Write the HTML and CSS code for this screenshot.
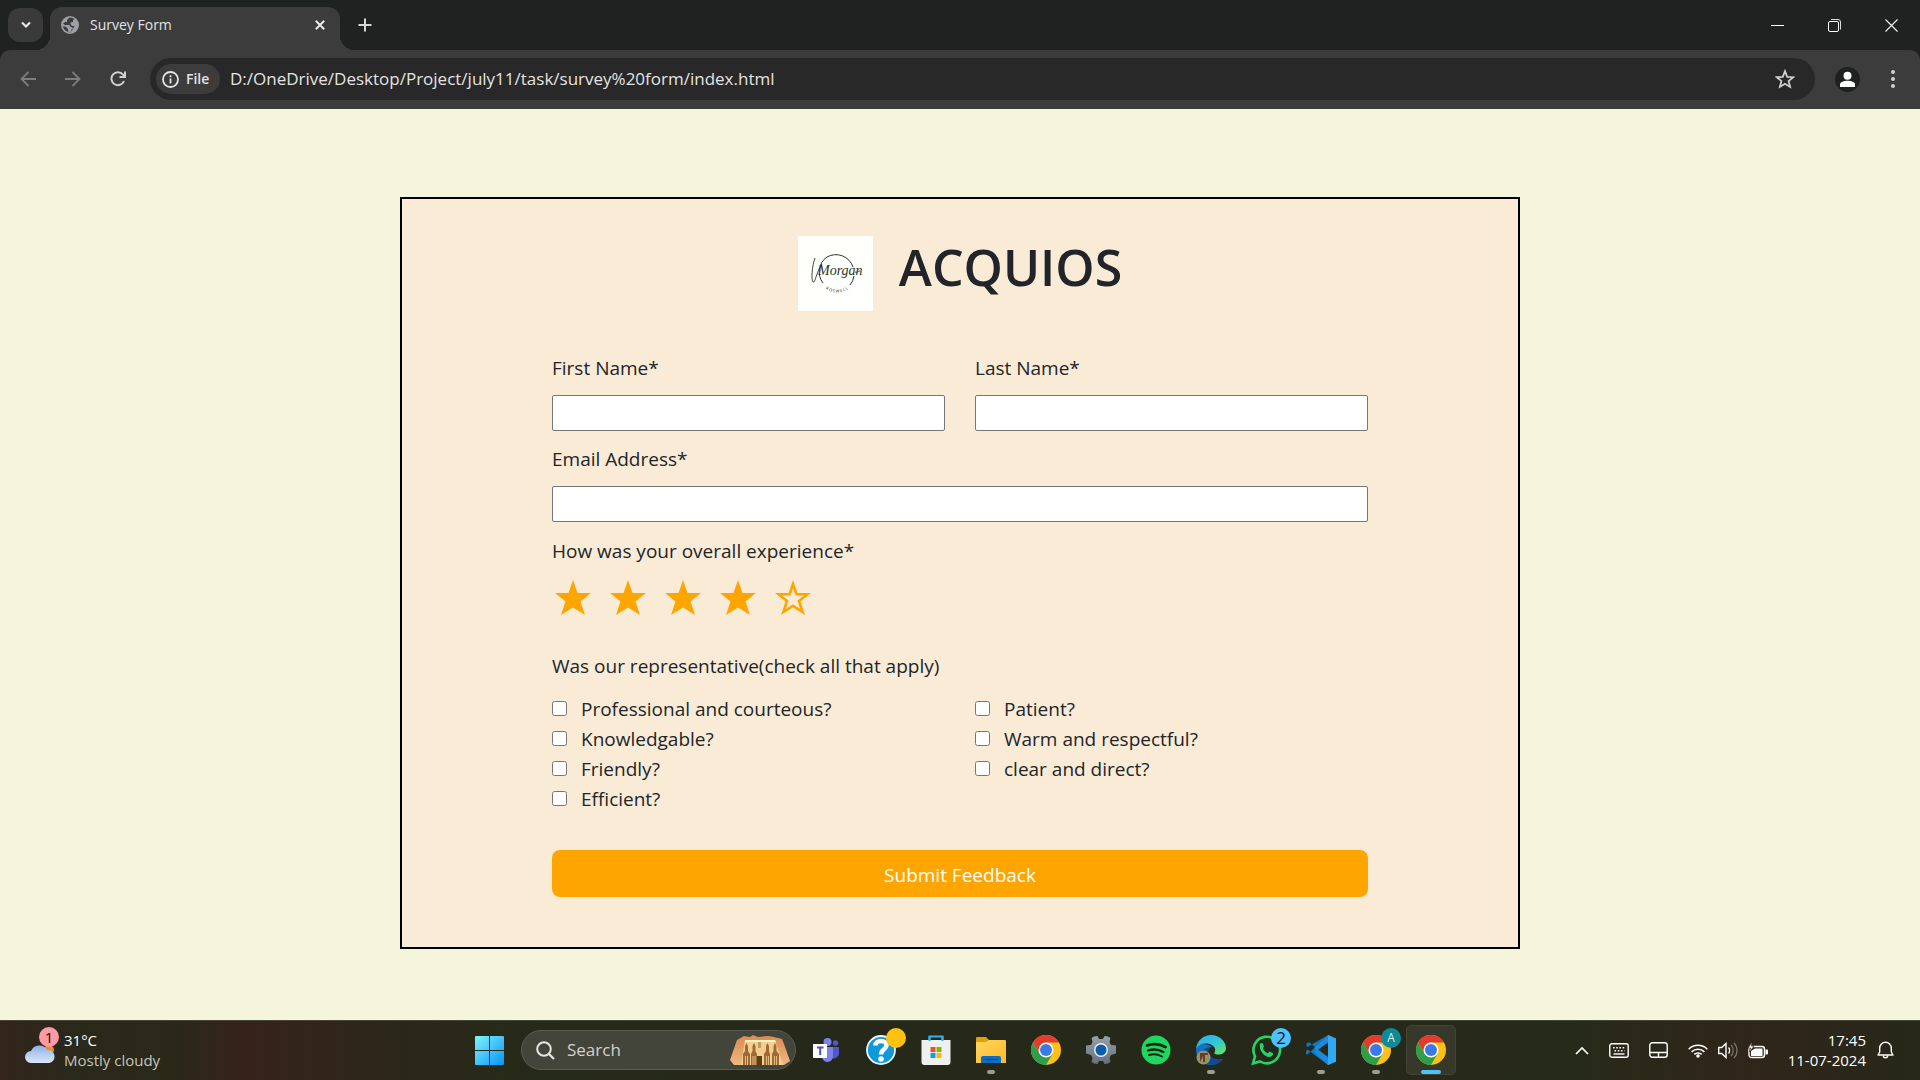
FILE: index.html
```html
<!DOCTYPE html>
<html lang="en">
<head>
<meta charset="utf-8">
<meta name="viewport" content="width=device-width, initial-scale=1">
<title>Survey Form</title>
<link rel="stylesheet" href="styles.css">
</head>
<body>
<svg class="defs" aria-hidden="true">
  <defs>
    <linearGradient id="win" x1="0" y1="0" x2="1" y2="1"><stop offset="0" stop-color="#7df4ff"/><stop offset="1" stop-color="#0a93f7"/></linearGradient>
    <linearGradient id="cloud" x1="0" y1="0" x2="0" y2="1"><stop offset="0" stop-color="#8fb0e8"/><stop offset="1" stop-color="#dbe7fb"/></linearGradient>
    <linearGradient id="folder" x1="0" y1="0" x2="1" y2="1"><stop offset="0" stop-color="#ffd75e"/><stop offset="1" stop-color="#fdb92a"/></linearGradient>
    <linearGradient id="gear" x1="0" y1="0" x2="0" y2="1"><stop offset="0" stop-color="#97a1ab"/><stop offset="1" stop-color="#66707c"/></linearGradient>
    <linearGradient id="edgeTop" x1="0" y1="0" x2="1" y2="1"><stop offset="0" stop-color="#2fa9e8"/><stop offset=".5" stop-color="#2fc5dc"/><stop offset="1" stop-color="#6bea4e"/></linearGradient>
    <linearGradient id="stone" x1="0" y1="0" x2="0" y2="1"><stop offset="0" stop-color="#d98a54"/><stop offset="1" stop-color="#efb87f"/></linearGradient>
    <symbol id="chrome" viewBox="0 0 30 30">
      <circle cx="15" cy="15" r="15" fill="#fbc116"/>
      <path d="M2 7.500A15 15 0 0 1 28 7.500L15 7.500 8.500 18.800Z" fill="#e33b2e"/>
      <path d="M2 7.500A15 15 0 0 0 15 30L21.500 18.800 8.500 18.800Z" fill="#2e9e49"/>
      <circle cx="15" cy="15" r="7.500" fill="#fff"/>
      <circle cx="15" cy="15" r="6" fill="#3b78e8"/>
    </symbol>
    <symbol id="star" viewBox="0 0 36 35"><path d="M18 0l4.500 13H36L25.500 21.500 30 35 18 27.500 6 35l4.500-13.500L0 13h13.500Z" fill="#ffa500"/></symbol>
    <symbol id="star-open" viewBox="0 0 36 35"><path fill-rule="evenodd" d="M18 0l4.500 13H36L25.500 21.500 30 35 18 27.500 6 35l4.500-13.500L0 13h13.500Zm0 8.500L15.300 15.500H7L13.500 20.500 10.800 29 18 24.300 25.200 29 22.500 20.500 29 15.500H20.700Z" fill="#ffa500"/></symbol>
  </defs>
</svg>

<header class="browser">
  <div class="tabstrip">
    <button class="tab-search" aria-label="Search tabs"><svg width="12" height="8" viewBox="0 0 12 8"><path d="M2 1.500l4 4 4-4" fill="none" stroke="#e8e8e8" stroke-width="2.200"/></svg></button>
    <div class="tab">
      <svg width="18" height="18" viewBox="0 0 18 18"><circle cx="9" cy="9" r="9" fill="#9aa0a6"/><path d="M8.500 1.500 6 4v2H4L2 7.500 4 9h4.500l1 2H11l1 1.500-2 1.500v2.500A7.500 7.500 0 0 1 2 10l3 1 2 2v2.500l2 1 3-3.500 1.500-3H11L9.500 8V6.500L12 6V4l1.500-1A7.500 7.500 0 0 0 8.500 1.500Z" fill="#3c3c3c"/></svg>
      <span class="tab-title">Survey Form</span>
      <button class="plain" aria-label="Close tab"><svg width="10" height="10" viewBox="0 0 10 10"><path d="M.8.8l8.400 8.400M9.200.8.8 9.200" stroke="#e8e8e8" stroke-width="2"/></svg></button>
    </div>
    <button class="plain new-tab" aria-label="New tab"><svg width="14" height="14" viewBox="0 0 14 14"><path d="M7 .5v13M.5 7h13" stroke="#d6d6d6" stroke-width="2"/></svg></button>
    <div class="window-buttons">
      <button class="plain" aria-label="Minimize"><svg width="13" height="13" viewBox="0 0 13 13"><path d="M0 6.500h13" stroke="#fff"/></svg></button>
      <button class="plain" aria-label="Restore"><svg width="13" height="13" viewBox="0 0 13 13"><rect x=".5" y="2.500" width="10" height="10" rx="1.500" fill="none" stroke="#fff"/><path d="M3 .5h7a2.500 2.500 0 0 1 2.500 2.500v7.500" fill="none" stroke="#ddd"/></svg></button>
      <button class="plain" aria-label="Close"><svg width="13" height="13" viewBox="0 0 13 13"><path d="M.5.5l12 12M12.500.5l-12 12" stroke="#eee" stroke-width="1.200"/></svg></button>
    </div>
  </div>
  <div class="toolbar">
    <button class="plain" aria-label="Back"><svg width="16" height="16" viewBox="0 0 16 16"><path d="M16 8H2M8.500 1 1.500 8l7 7" fill="none" stroke="#7c7c7c" stroke-width="1.800"/></svg></button>
    <button class="plain" aria-label="Forward"><svg width="16" height="16" viewBox="0 0 16 16"><path d="M0 8h14M7.500 1l7 7-7 7" fill="none" stroke="#7c7c7c" stroke-width="1.800"/></svg></button>
    <button class="plain" aria-label="Reload"><svg width="16" height="16" viewBox="0 0 16 16"><path d="M14 10A6.500 6.500 0 1 1 13 3.600L14.500 5.500M15 .5v5.500H9.500" fill="none" stroke="#d0d0d0" stroke-width="2"/></svg></button>
    <div class="omnibox">
      <button class="chip"><svg width="17" height="17" viewBox="0 0 17 17"><circle cx="8.500" cy="8.500" r="7.500" fill="none" stroke="#e3e3e3" stroke-width="1.800"/><path d="M8.500 7.500v5M8.500 4.200v2" stroke="#e3e3e3" stroke-width="1.800"/></svg>File</button>
      <input class="url" type="text" aria-label="Address" value="D:/OneDrive/Desktop/Project/july11/task/survey%20form/index.html">
      <button class="plain bookmark" aria-label="Bookmark"><svg width="20" height="20" viewBox="0 0 20 20"><path d="M10 2.200l2.200 5.600 6 .4-4.600 3.800 1.500 5.900L10 14.700l-5.100 3.200 1.500-5.900L1.800 8.200l6-.4Z" fill="none" stroke="#cfcfcf" stroke-width="1.800"/></svg></button>
    </div>
    <button class="plain avatar" aria-label="Profile"><svg width="25" height="25" viewBox="0 0 25 25"><circle cx="12.500" cy="12.500" r="12.500" fill="#1f2121"/><circle cx="12.500" cy="8.800" r="4" fill="#fff"/><path d="M5 20v-2.500c0-2.500 4-3.700 7.500-3.700s7.500 1.200 7.500 3.700V20Z" fill="#fff"/></svg></button>
    <button class="plain" aria-label="Menu"><svg width="4" height="18" viewBox="0 0 4 18"><g fill="#d0d0d0"><circle cx="2" cy="2" r="2"/><circle cx="2" cy="9" r="2"/><circle cx="2" cy="16" r="2"/></g></svg></button>
  </div>
</header>

<main class="page">
  <form class="card">
    <div class="brand">
      <svg class="logo" viewBox="0 0 75 75" role="img" aria-label="Morgan">
        <rect width="75" height="75" fill="#fffffb"/>
        <path d="M25 47A18 18 0 0 1 29 21a18 18 0 0 1 26 10M56 40a18 18 0 0 1-4 9" fill="none" stroke="#273530"/>
        <path d="M17 22c-3 8-4 22-2 24s4-12 9-18" fill="none" stroke="#273530" stroke-width=".9"/>
        <path d="M57 36c2 1 3-1 5-1" fill="none" stroke="#273530" stroke-width=".9"/>
        <text x="20" y="39" class="logo-name">Morgan</text>
        <path id="arc" d="M22 46a19 19 0 0 0 34 0" fill="none"/>
        <text class="logo-sub" text-anchor="middle"><textPath href="#arc" startOffset="50%">R O S W E L L</textPath></text>
      </svg>
      <h1>ACQUIOS</h1>
    </div>

    <div class="fields">
      <div class="field"><label for="first">First Name*</label><input id="first" type="text"></div>
      <div class="field"><label for="last">Last Name*</label><input id="last" type="text"></div>
      <div class="field wide"><label for="email">Email Address*</label><input id="email" type="email"></div>
    </div>

    <div class="rating" role="group" aria-labelledby="rating-label">
      <p id="rating-label">How was your overall experience*</p>
      <div class="stars">
        <button type="button" class="plain" aria-label="1 star"><svg width="36" height="35"><use href="#star"/></svg></button>
        <button type="button" class="plain" aria-label="2 stars"><svg width="36" height="35"><use href="#star"/></svg></button>
        <button type="button" class="plain" aria-label="3 stars"><svg width="36" height="35"><use href="#star"/></svg></button>
        <button type="button" class="plain" aria-label="4 stars"><svg width="36" height="35"><use href="#star"/></svg></button>
        <button type="button" class="plain" aria-label="5 stars"><svg width="36" height="35"><use href="#star-open"/></svg></button>
      </div>
    </div>

    <fieldset class="traits">
      <legend>Was our representative(check all that apply)</legend>
      <div class="trait-columns">
        <div>
          <label><input type="checkbox">Professional and courteous?</label>
          <label><input type="checkbox">Knowledgable?</label>
          <label><input type="checkbox">Friendly?</label>
          <label><input type="checkbox">Efficient?</label>
        </div>
        <div>
          <label><input type="checkbox">Patient?</label>
          <label><input type="checkbox">Warm and respectful?</label>
          <label><input type="checkbox">clear and direct?</label>
        </div>
      </div>
    </fieldset>

    <button class="submit" type="submit">Submit Feedback</button>
  </form>
</main>

<footer class="taskbar">
  <button class="weather">
    <span class="weather-icon">
      <svg width="30" height="19" viewBox="0 0 30 19"><circle cx="24" cy="6" r="5" fill="#f98a1c"/><path d="M6 19a6 6 0 0 1 0-12 9 9 0 0 1 16-1 6.500 6.500 0 0 1 2 13Z" fill="url(#cloud)"/></svg>
      <span class="badge pink">1</span>
    </span>
    <span class="weather-text"><span>31°C</span><span class="dim">Mostly cloudy</span></span>
  </button>

  <nav class="apps" aria-label="Apps">
    <button class="app" aria-label="Start"><svg width="29" height="29" viewBox="0 0 29 29"><path d="M1 0h13v14H0V1a1 1 0 0 1 1-1ZM15 0h13a1 1 0 0 1 1 1v13H15ZM0 15h14v14H1a1 1 0 0 1-1-1ZM15 15h14v13a1 1 0 0 1-1 1H15Z" fill="url(#win)"/></svg></button>
    <label class="search">
      <svg width="19" height="19" viewBox="0 0 19 19"><circle cx="8" cy="8" r="6.800" fill="none" stroke="#e6e6e6" stroke-width="2"/><path d="M13 13l5 5" stroke="#e6e6e6" stroke-width="2.200"/></svg>
      <input type="text" placeholder="Search" aria-label="Search">
      <svg width="60" height="32" viewBox="0 0 60 32">
        <path d="M0 26 7 6l7-4 6 1 3-2 5 2 10-1 6 1 8 2 2 5 6 17-6 4H4Z" fill="url(#stone)"/>
        <path d="M11 31 15 6h30l8 25Z" fill="#f1cf93"/>
        <path d="M15 6h30l1 2H15Z" fill="#fff0c4"/>
        <g fill="#a06a35"><path d="M13 31V20l2-3v-5l1.500-3 1.500 3v5l2 3v11ZM21 31V20l1.500-3v-5l1.500-3 1.500 3v5l1.500 3v11ZM34 31V20l2-3v-5l1.500-3 1.500 3v5l1 3v11ZM42 31V20l1.500-3v-5L45 9l1.500 3v5l2.500 3v11Z"/><path d="M28 8h3v6h-3Z" fill="#c79a5b"/></g>
        <g stroke="#f1cf93" stroke-width=".8"><path d="M15.500 22v9M17.500 22v9M23 22v9M25 22v9M36.500 22v9M38.500 22v9M44.500 22v9M46.500 22v9"/></g>
        <path d="M27 22h5v9h-5Z" fill="#5b3d14"/>
      </svg>
    </label>
    <button class="app" aria-label="Teams"><svg width="26" height="24" viewBox="0 0 26 24"><circle cx="14.500" cy="4" r="4" fill="#7b83eb"/><circle cx="22.500" cy="5" r="2.700" fill="#5059c9"/><path d="M16 9h10v7a5 5 0 0 1-8 3.500Z" fill="#5059c9"/><path d="M9 9h11v9a5.500 5.500 0 0 1-11 1Z" fill="#7b83eb"/><rect y="6" width="14" height="14" fill="#fff"/><path d="M4 9.500h6.500M7.200 9.500V17" stroke="#4b53bc" stroke-width="2"/></svg></button>
    <button class="app" aria-label="Help"><svg width="30" height="30" viewBox="0 0 30 30"><circle cx="15" cy="15" r="14" fill="#0d99da" stroke="#eef6fa" stroke-width="1.800"/><path d="M9.500 10.500c0-6 11-6 11 0 0 4-5.500 3.500-5.500 9" fill="none" stroke="#fff" stroke-width="4.500"/><circle cx="15" cy="24" r="2.800" fill="#fff"/></svg><span class="badge yellow"></span></button>
    <button class="app" aria-label="Store"><svg width="30" height="30" viewBox="0 0 30 30"><path d="M8.500 8V1.500h13V8" fill="none" stroke="#2fb5ee" stroke-width="2"/><path d="M.5 5h29v22a3 3 0 0 1-3 3h-23a3 3 0 0 1-3-3Z" fill="#f0f0f0"/><path d="M8.500 6V1.500M21.500 6V1.500" stroke="#2fb5ee" stroke-width="2"/><path d="M9.500 12h5v5h-5Z" fill="#f25022"/><path d="M15.500 12h5v5h-5Z" fill="#7fba00"/><path d="M9.500 18h5v5h-5Z" fill="#00a4ef"/><path d="M15.500 18h5v5h-5Z" fill="#ffb900"/></svg></button>
    <button class="app open" aria-label="File Explorer"><svg width="30" height="28" viewBox="0 0 30 28"><path d="M0 2a1 1 0 0 1 1-1h9l3 3v5H0Z" fill="#e3a008"/><path d="M0 6h10l3-2h16a1 1 0 0 1 1 1v22H0Z" fill="url(#folder)"/><path d="M5 27v-5a2 2 0 0 1 2-2h16a2 2 0 0 1 2 2v5Z" fill="#0f6cc4"/><path d="M8.500 23.500h13" stroke="#0a4a8c"/></svg></button>
    <button class="app" aria-label="Chrome"><svg width="30" height="30"><use href="#chrome"/></svg></button>
    <button class="app" aria-label="Settings"><svg width="30" height="30" viewBox="0 0 30 30"><path d="M8 1.500 11.500 1 13 4h4l1.500-3L22 1.500 24.500 3 23.500 7l1.500 3 5 .5v8l-5 1.500-1.500 3 1 4L22 28.500 18.500 29 17 26h-4l-1.500 3L8 28.500 5.500 27l1-4L5 20l-5-1.500v-8L5 10 6.500 7l-1-4Z" fill="url(#gear)"/><circle cx="15" cy="15" r="7" fill="#e8f0f6"/><circle cx="15" cy="15" r="5.500" fill="#0b5cad"/></svg></button>
    <button class="app" aria-label="Spotify"><svg width="30" height="30" viewBox="0 0 30 30"><circle cx="15" cy="15" r="14.500" fill="#1ed760"/><g fill="none" stroke="#16200f" stroke-linecap="round"><path d="M6 10.500c6-2 13-1.500 18.500 1.500" stroke-width="2.800"/><path d="M7 15.500c5-1.600 11-1 15.500 1.500" stroke-width="2.300"/><path d="M8 20c4-1.200 9-.8 13 1.500" stroke-width="1.900"/></g></svg></button>
    <button class="app open" aria-label="Edge"><svg width="30" height="30" viewBox="0 0 30 30"><path d="M0 15a15 15 0 0 0 27 9c-5 2-14 1-15-6-.5-4 2-6 4-6C10 7 1 8 0 15Z" fill="#1174c8"/><path d="M8 27c-6-8-1-15 7-15-6 5-3 13 12 12-4 6-13 8-19 3Z" fill="#0d4b94"/><path d="M0 14C1 5 8 0 15 0c9 0 15 7 15 13 0 5-5 7-9 6.500-2-.3-3-1-2.500-2 2-3 0-8-7-9C6 8 2 10 0 14Z" fill="url(#edgeTop)"/><circle cx="7.500" cy="22.500" r="7" fill="#93936a"/><path d="M4 18h8v2h-3v7H7v-6l-3 6Z" fill="#6d3a2a"/></svg></button>
    <button class="app" aria-label="WhatsApp"><svg width="31" height="30" viewBox="0 0 31 30"><path d="M2 28.500l2-7.200A13.300 13.300 0 1 1 9 26.500Z" fill="none" stroke="#25d366" stroke-width="2.600"/><path d="M9 9c1-1.500 2.500-1.500 3 0l1 2.500-1.200 2c1.200 2.400 2.800 3.800 5 4.700l1.700-1.700 3.500 1.700c.5 2.300-2 3.800-4 3.800C12.500 21.500 7.500 14 9 9Z" fill="#25d366"/></svg><span class="badge blue">2</span></button>
    <button class="app open" aria-label="Visual Studio Code"><svg width="30" height="30" viewBox="0 0 30 30"><path d="M22 0 2 19c-1.500 1-2 .5-2-1.500s.5-2 1.500-3L22 30V22L4 8C2.500 7 1 8 .5 9s0 2 1 3Z" fill="#0b7ac5"/><path d="M22 0 8 13l3 2.500L22 7.500v15L11 14.500 8 17l14 13 8-3.500v-23Z" fill="#1b8ad8"/><path d="M22 0l8 3.500v23L22 30Z" fill="#32a8f3"/></svg></button>
    <button class="app open" aria-label="Chrome, profile A"><svg width="30" height="30"><use href="#chrome"/></svg><span class="badge teal">A</span></button>
    <button class="app open active" aria-label="Chrome, Survey Form"><svg width="30" height="30"><use href="#chrome"/></svg></button>
  </nav>

  <div class="tray">
    <button class="plain" aria-label="Hidden icons"><svg width="14" height="9" viewBox="0 0 14 9"><path d="M1 8l6-6 6 6" fill="none" stroke="#fff" stroke-width="1.700"/></svg></button>
    <button class="plain" aria-label="Keyboard"><svg width="20" height="15" viewBox="0 0 20 15"><rect x=".8" y=".8" width="18.400" height="13.400" rx="2" fill="none" stroke="#fff" stroke-width="1.400"/><path d="M4 4.700h12M5.500 7.700h10" stroke="#fff" stroke-width="1.600" stroke-dasharray="1.600 1.600"/><path d="M4.500 11h11" stroke="#fff" stroke-width="1.400"/></svg></button>
    <button class="plain" aria-label="Touchpad"><svg width="19" height="16" viewBox="0 0 19 16"><rect x=".8" y=".8" width="17.400" height="14.400" rx="2.500" fill="none" stroke="#fff" stroke-width="1.400"/><path d="M1 10.500h17M9.500 10.500V15" stroke="#fff" stroke-width="1.400"/></svg></button>
    <button class="plain quick" aria-label="Network, volume and battery">
      <svg width="20" height="15" viewBox="0 0 20 15"><g fill="none" stroke="#fff" stroke-width="1.500"><path d="M.7 6.200a13 13 0 0 1 18.600 0M3.600 8.900a9 9 0 0 1 12.800 0M6.300 11.400a5.300 5.300 0 0 1 7.400 0"/></g><circle cx="10" cy="13" r="1.800" fill="#fff"/></svg>
      <svg width="20" height="17" viewBox="0 0 20 17"><path d="M.7 5.500h3L8 1.500v14l-4.300-4h-3Z" fill="none" stroke="#fff" stroke-width="1.400"/><path d="M10.500 5.500c1.500 1.500 1.500 4.500 0 6" fill="none" stroke="#fff" stroke-width="1.300"/><path d="M13 3c3 3 3 8 0 11M16 1c4 4 4 11 0 15" fill="none" stroke="#77776a" stroke-width="1.200"/></svg>
      <svg width="20" height="17" viewBox="0 0 20 17"><rect x="1" y="4.500" width="15.500" height="11" rx="2.500" fill="none" stroke="#fff" stroke-width="1.400"/><path d="M3 14V9l4-2.500h7.500V14Z" fill="#fff"/><path d="M17.500 7.500h1.500a1 1 0 0 1 1 1v3a1 1 0 0 1-1 1h-1.500Z" fill="#fff"/><path d="M4 0 0 6h2.500L1.500 10 6 4H3.500Z" fill="#fff" stroke="#2e2619" stroke-width=".7"/></svg>
    </button>
    <div class="clock"><span>17:45</span><span>11-07-2024</span></div>
    <button class="plain" aria-label="Notifications"><svg width="17" height="18" viewBox="0 0 17 18"><path d="M1 14h15l-1.700-3V7a5.800 5.800 0 0 0-11.600 0v4Z" fill="none" stroke="#fff" stroke-width="1.400" stroke-linejoin="round"/><path d="M6.300 14.500a2.200 2.200 0 0 0 4.400 0" fill="none" stroke="#fff" stroke-width="1.400"/></svg></button>
  </div>
</footer>
</body>
</html>
```
FILE: styles.css
```css
* { box-sizing: border-box; }

body {
  margin: 0;
  min-height: 100vh;
  display: flex;
  flex-direction: column;
  background: #f5f5dc;
  color: #212529;
  font: 19px/30px "Open Sans", "Noto Sans", sans-serif;
}

button, input { font: inherit; color: inherit; }
svg { display: block; flex: none; }
.defs { position: absolute; width: 0; height: 0; }

.plain {
  padding: 0;
  border: 0;
  background: none;
  display: flex;
  align-items: center;
  justify-content: center;
}

/* Browser chrome */
.browser { background: #202221; color: #e3e3e3; }

.tabstrip {
  height: 50px;
  display: flex;
  align-items: center;
  padding: 0 0 0 8px;
}

.tab-search {
  width: 35px;
  height: 34px;
  padding: 0;
  border: 0;
  border-radius: 12px;
  background: #3a3a3a;
  display: flex;
  align-items: center;
  justify-content: center;
}

.tab {
  position: relative;
  align-self: flex-end;
  width: 290px;
  height: 43px;
  margin-left: 7px;
  padding: 0 15px 7px 11px;
  border-radius: 12px 12px 0 0;
  background: #3c3c3c;
  display: flex;
  align-items: center;
  gap: 11px;
  font-size: 14px;
  line-height: 20px;
}

.tab::before, .tab::after {
  content: "";
  position: absolute;
  bottom: 0;
  width: 14px;
  height: 14px;
}
.tab::before { right: 100%; background: radial-gradient(circle at 0 0, transparent 14px, #3c3c3c 14px); }
.tab::after { left: 100%; background: radial-gradient(circle at 100% 0, transparent 14px, #3c3c3c 14px); }

.tab-title { flex: 1; }
.new-tab { width: 50px; height: 34px; }
.window-buttons { margin-left: auto; display: flex; }
.window-buttons .plain { width: 57px; height: 50px; }

.toolbar {
  height: 59px;
  padding: 0 5px 1px;
  border-radius: 10px 10px 0 0;
  background: #3c3c3c;
  display: flex;
  align-items: center;
}
.toolbar > .plain { width: 45px; height: 42px; }

.omnibox {
  flex: 1;
  height: 42px;
  margin-left: 10px;
  padding: 0 20px 0 6px;
  border-radius: 21px;
  background: #282828;
  display: flex;
  align-items: center;
}

.chip {
  width: 64px;
  height: 30px;
  padding: 0 0 0 6px;
  border: 0;
  border-radius: 15px;
  background: #3c3c3c;
  display: flex;
  align-items: center;
  gap: 7px;
  font-size: 14px;
  font-weight: 600;
  line-height: 20px;
}

.url {
  flex: 1;
  min-width: 0;
  margin-left: 10px;
  padding: 0;
  border: 0;
  outline: 0;
  background: none;
  font-size: 17px;
}

.toolbar > .avatar { width: 25px; margin: 0 10px 0 20px; }

/* Survey page */
.page { flex: 1; padding: 88px 16px 71px; }

.card {
  width: 1120px;
  max-width: 100%;
  margin: 0 auto;
  padding: 37px 150px 50px;
  border: 2px solid #000;
  background: #faebd7;
}

.brand { display: flex; justify-content: center; gap: 26px; }
.logo { width: 75px; height: 75px; }
.logo-name { font: italic 14px "Liberation Serif", serif; fill: #273530; }
.logo-sub { font: 4px "Noto Sans", sans-serif; fill: #273530; }

h1 { margin: 0; font-size: 50px; font-weight: 600; line-height: 62px; }

.fields {
  margin-top: 42px;
  display: grid;
  grid-template-columns: 1fr 1fr;
  gap: 13px 30px;
}
.wide { grid-column: 1 / -1; }
.field label { display: block; margin-bottom: 12px; }
.field input {
  display: block;
  width: 100%;
  height: 36px;
  padding: 0 8px;
  border: 1px solid #767676;
  border-radius: 2px;
  background: #fff;
}

.rating { margin-top: 14px; }
.rating p { margin: 0; }
.stars { margin-top: 14px; padding-left: 3px; display: flex; gap: 19px; }

.traits { margin: 36px 0 0; padding: 0; border: 0; }
.traits legend { padding: 0; }
.trait-columns {
  margin-top: 13px;
  display: grid;
  grid-template-columns: 1fr 1fr;
  gap: 30px;
}
.trait-columns label { display: flex; align-items: center; gap: 14px; }
.trait-columns input { width: 15px; height: 15px; margin: 0 0 2px; }

.submit {
  display: block;
  width: 100%;
  height: 47px;
  margin-top: 36px;
  padding: 2px 0 0;
  border: 0;
  border-radius: 8px;
  background: #ffa500;
  color: #fff;
}

/* Taskbar */
.taskbar {
  height: 60px;
  padding-bottom: 1px;
  border-top: 1px solid #45473a;
  background: linear-gradient(90deg, #32241a 0, #29291a 4%, #2b2818 9%, #36221a 13%, #2c2718 20%, #262a1a 28%, #262819 50%, #262a1a 82%, #302519 91%, #262819 100%);
  color: #fff;
  display: grid;
  grid-template-columns: 1fr auto 1fr;
  align-items: center;
  font-size: 15px;
  line-height: 20px;
}

.weather {
  justify-self: start;
  margin-left: 25px;
  padding: 0;
  border: 0;
  background: none;
  display: flex;
  align-items: center;
  gap: 9px;
  text-align: left;
}
.weather-icon { position: relative; padding-top: 6px; }
.weather-text, .clock { display: flex; flex-direction: column; }
.dim { color: #c4c4bc; }

.badge {
  position: absolute;
  top: 3px;
  right: 0;
  width: 20px;
  height: 20px;
  border-radius: 50%;
  color: #111;
}
.badge.pink { top: -11px; right: -4px; background: #ff99a4; text-align: center; }
.badge.yellow { background: #ffc20e; }
.badge.blue { background: #4cc2ff; font-size: 17px; }
.badge.teal { background: #0f8a99; color: #d5f0f2; font-size: 12px; }

.apps { display: flex; align-items: center; gap: 5px; }

.app {
  position: relative;
  width: 50px;
  height: 50px;
  padding: 0;
  border: 0;
  border-radius: 5px;
  background: none;
  display: flex;
  align-items: center;
  justify-content: center;
}
.active { background: #36382a; border: 1px solid #414335; }

.open::after {
  content: "";
  position: absolute;
  left: 50%;
  bottom: 1px;
  width: 8px;
  height: 4px;
  margin-left: -4px;
  border-radius: 2px;
  background: #9c9c94;
}
.active::after { bottom: 0; width: 20px; margin-left: -10px; background: #4cc2ff; }

.search {
  width: 275px;
  height: 40px;
  margin-left: 2px;
  padding: 0 5px 0 14px;
  border: 1px solid #5a5c4f;
  border-radius: 20px;
  background: #43453a;
  display: flex;
  align-items: center;
  gap: 12px;
}
.search input {
  flex: 1;
  min-width: 0;
  padding: 0;
  border: 0;
  outline: 0;
  background: none;
  font-size: 17px;
}
.search input::placeholder { color: #d2d2cc; opacity: 1; }

.tray {
  justify-self: end;
  margin-right: 26px;
  display: flex;
  align-items: center;
  gap: 20px;
}
.quick { gap: 10px; }
.clock { text-align: right; }
.clock + .plain { margin-left: -9px; }
```
